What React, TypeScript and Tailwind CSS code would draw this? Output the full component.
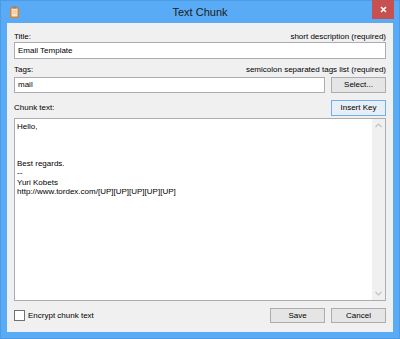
import "react";

const bodyLines = [
	"Hello,",
	"",
	"",
	"",
	"Best regards.",
	"--",
	"Yuri Kobets",
	"http://www.tordex.com/[UP][UP][UP][UP][UP]",
];

function WinButton({ label, focused }: { label: string; focused?: boolean }) {
	return (
		<div
			className={`w-[55px] h-full flex items-center justify-center border text-[8px] leading-none text-black
				${focused ? "border-[#6fb0ec] bg-[#e8eef5]" : "border-[#adadad] bg-[#e5e5e5]"}
			`}
		>
			{label}
		</div>
	);
}

export default function App() {
	return (
		<div
			className="w-[400px] h-[339px] box-border border border-[#4b9be6] bg-[#5aabf5] flex flex-col relative"
			style={{ fontFamily: '"Liberation Sans", Arial, sans-serif' }}
		>
			{/* title bar */}
			<div className="h-[22px] shrink-0 flex items-center relative">
				<div className="pl-[9px] flex items-center">
					<svg width="9" height="12" viewBox="0 0 9 12">
						<rect x="0" y="1" width="9" height="11" rx="1.5" fill="#d9822b" />
						<rect x="1.5" y="2.5" width="6" height="8" fill="#f4e3c6" />
						<rect x="2.5" y="0" width="4" height="2.5" rx="0.5" fill="#8a8a8a" />
						<line x1="2.5" y1="5" x2="6.5" y2="5" stroke="#c9a97a" strokeWidth="0.6" />
						<line x1="2.5" y1="7" x2="6.5" y2="7" stroke="#c9a97a" strokeWidth="0.6" />
					</svg>
				</div>
				<div className="absolute inset-0 flex items-center justify-center text-[11px] text-[#1b1b1b]">
					Text Chunk
				</div>
				<div className="absolute top-[-1px] right-[5px] w-[22px] h-[19px] bg-[#c75050] flex items-center justify-center">
					<svg width="7" height="7" viewBox="0 0 7 7">
						<path d="M1 1L6 6M6 1L1 6" stroke="#ffffff" strokeWidth="1.6" />
					</svg>
				</div>
			</div>

			{/* client area */}
			<div className="mx-[6px] h-[309px] shrink-0 bg-[#f0f0f0] px-[7px] pt-[9px] flex flex-col text-[8px] text-black">
				<div className="h-[10px] leading-[10px] flex justify-between">
					<span>Title:</span>
					<span>short description (required)</span>
				</div>
				<div className="h-[17px] border border-[#abadb3] bg-white flex items-center px-[3px] leading-none">
					Email Template
				</div>

				<div className="mt-[6px] h-[10px] leading-[10px] flex justify-between">
					<span>Tags:</span>
					<span>semicolon separated tags list (required)</span>
				</div>
				<div className="mt-[2px] h-[16px] flex gap-[6px]">
					<div className="flex-1 border border-[#abadb3] bg-white flex items-center px-[3px] leading-none">
						mail
					</div>
					<WinButton label="Select..." />
				</div>

				<div className="mt-[7px] h-[16px] flex items-center justify-between">
					<span>Chunk text:</span>
					<WinButton label="Insert Key" focused />
				</div>

				<div className="mt-[2px] h-[183px] border border-[#abadb3] bg-white flex">
					<div className="flex-1 pl-[2px] pt-[3px] leading-[9.3px]">
						{bodyLines.map((line, i) => (
							<div key={i} className="h-[9.3px] whitespace-pre">
								{line}
							</div>
						))}
					</div>
					<div className="w-[13px] bg-[#f0f0f0] flex flex-col justify-between items-center py-[4px]">
						<svg width="7" height="5" viewBox="0 0 7 5">
							<path d="M0.5 4L3.5 1L6.5 4" stroke="#c2c2c2" strokeWidth="1.2" fill="none" />
						</svg>
						<svg width="7" height="5" viewBox="0 0 7 5">
							<path d="M0.5 1L3.5 4L6.5 1" stroke="#c2c2c2" strokeWidth="1.2" fill="none" />
						</svg>
					</div>
				</div>

				<div className="mt-[7px] h-[15px] flex items-center">
					<div className="w-[11px] h-[11px] border border-[#707070] bg-white" />
					<span className="ml-[3px]">Encrypt chunk text</span>
					<div className="ml-auto h-full flex gap-[6px]">
						<WinButton label="Save" />
						<WinButton label="Cancel" />
					</div>
				</div>
			</div>
		</div>
	);
}
